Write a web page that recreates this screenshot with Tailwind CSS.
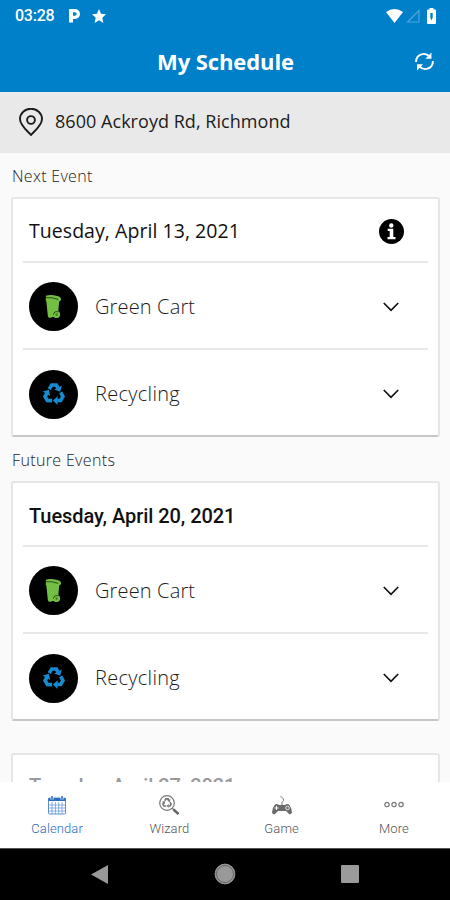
<!DOCTYPE html>
<html lang="en">
<head>
<meta charset="utf-8">
<title>My Schedule</title>
<script src="https://cdn.jsdelivr.net/npm/@tailwindcss/browser@4"></script>
</head>
<body class="w-[450px] h-[900px] overflow-hidden bg-[#fafafa] font-['Open_Sans','Noto_Sans',sans-serif] text-black whitespace-nowrap">
<svg class="hidden">
  <symbol id="cart" viewBox="0 0 18 26">
    <path fill="#72bf44" d="M1 1.500Q6 0 13 2Q17 2.500 17 6L15 8L14 19L12 25H10V24H7V25H4L3 23L1.500 8L.8 7Z"/>
    <circle cx="12.300" cy="21.500" r="3.700" fill="#72bf44"/>
    <path fill="none" stroke="#102308" stroke-width=".8" d="M1 3.700Q8 3 14 5.500M9 21.500a3.300 3.300 0 0 1 5-2.700"/>
    <circle cx="12.300" cy="21.700" r="1.200" fill="#3c7422"/>
  </symbol>
  <symbol id="recycle" viewBox="-12 -12 24 24">
    <g id="arrow"><path fill="none" stroke="currentColor" stroke-width="3.600" d="M-4.800-4.900L-2.300-9H2.300L4-6"/><path fill="currentColor" d="M.2-4.400L6.200-2.300L7.800-8.600Z"/></g>
    <use href="#arrow" transform="rotate(120)"/>
    <use href="#arrow" transform="rotate(240)"/>
  </symbol>
  <symbol id="chevron" viewBox="0 0 16 10"><path fill="none" stroke="#111" stroke-width="1.700" d="M.8 1L8 8.300L15.200 1"/></symbol>
</svg>
<div class="flex h-[900px] flex-col">
  <header class="h-[92px] shrink-0 bg-[#0080c9] text-white">
    <div class="flex h-8 items-center pl-[15px] pr-[14px]">
      <span class="w-[54px] font-['Roboto'] text-[16px] font-medium tracking-[-0.25px]">03:28</span>
      <svg class="h-[14px] w-[11px]" viewBox="0 0 11 14"><path fill="white" fill-rule="evenodd" d="M.5 0H6A5 5 0 0 1 6 10H4V13.500H0V.5ZM4 3.300V6.700H6A1.700 1.700 0 0 0 6 3.300Z"/></svg>
      <svg class="ml-3 h-[14px] w-[14px]" viewBox="0 0 14 14"><path fill="white" d="M7 0L9 4.700L14 5.200L10.300 8.700L11.400 14L7 11.300L2.600 14L3.700 8.700L0 5.200L5 4.700Z"/></svg>
      <svg class="ml-auto h-[14px] w-[17px]" viewBox="0 0 17 14"><path fill="white" d="M0 3Q8.500-3 17 3L8.500 14Z"/></svg>
      <svg class="ml-[3px] h-[14px] w-[14px]" viewBox="0 0 14 14"><path fill="none" stroke="#4ba5d9" stroke-width="1.200" d="M1.500 13L13 1.500V13Z"/></svg>
      <svg class="ml-[7px] h-4 w-[9px]" viewBox="0 0 9 16"><path fill="white" d="M2.500 0H6.500V1.500H8Q9 1.500 9 2.500V15Q9 16 8 16H1Q0 16 0 15V2.500Q0 1.500 1 1.500H2.500Z"/><path fill="#0080c9" d="M3.300 5H5.700V9.500L4.500 12.500L3.300 9.500Z"/></svg>
    </div>
    <div class="grid h-[59px] grid-cols-[60px_1fr_60px] items-center">
      <h1 class="col-start-2 pl-px text-center text-[22px] font-bold tracking-[-0.1px]">My Schedule</h1>
      <svg class="ml-[25px] h-[19px] w-[19px]" viewBox="0 0 20 19"><g fill="none" stroke="white" stroke-width="2"><path d="M1.200 10C.8 2.500 10-1.500 15.500 4.500"/><path d="M18.800 9C19.200 16.500 10 20.500 4.500 14.500"/></g><path fill="white" d="M17.300 0V6.500H11ZM2.200 19V12.500H8.500Z"/></svg>
    </div>
  </header>
  <div class="flex h-[61px] shrink-0 items-center bg-[#e9e9e9] pb-[2px] pl-[19px]">
    <svg class="h-[28px] w-6" viewBox="0 0 24 28"><path fill="none" stroke="#1c1c1c" stroke-width="1.900" d="M12 27C9 23.500 1 17.500 1 11a11 10.300 0 0 1 22 0C23 17.500 15 23.500 12 27Z"/><circle cx="12" cy="12" r="3.900" fill="none" stroke="#1c1c1c" stroke-width="1.900"/></svg>
    <span class="ml-3 text-[18px] tracking-[0.04px] text-[#1c1c1c]">8600 Ackroyd Rd, Richmond</span>
  </div>
  <main class="min-h-0 flex-1 overflow-hidden pl-[11px] pr-[10px]">
    <h2 class="flex h-[44px] items-center pt-px pl-px text-[16px] font-light tracking-[0.3px] text-[#222]">Next Event</h2>
    <section class="h-[240px] rounded-[3px] border-2 border-t-[#e6e6e6] border-x-[#e6e6e6] border-b-[#c6c6c6] bg-white px-[10px]">
      <div class="flex h-[64px] items-center border-b-2 border-[#e8e8e8] pl-[6px] pr-[24px] pt-[2px]">
        <span class="text-[19.500px] tracking-[0.05px] text-[#111]">Tuesday, April 13, 2021</span>
        <svg class="ml-auto h-[25px] w-[25px]" viewBox="0 0 25 25"><circle cx="12.500" cy="12.500" r="12.500"/><circle cx="12.300" cy="6.500" r="2.200" fill="white"/><path fill="white" d="M8.700 9.800H14.300V18H16.500V20.200H8.500V18H10.700V12H8.700Z"/></svg>
      </div>
      <div class="flex h-[87px] items-center border-b-2 border-[#e8e8e8] pl-[6px] pr-[29px] pt-[2px]">
        <div class="flex h-[49px] w-[49px] items-center justify-center rounded-full bg-black"><svg class="h-[25px] w-[17px]"><use href="#cart"/></svg></div>
        <span class="ml-[17px] text-[20px] font-light tracking-[0.15px] text-[#1c1c1c]">Green Cart</span><svg class="ml-auto h-[10px] w-4"><use href="#chevron"/></svg>
      </div>
      <div class="flex h-[86px] items-center pl-[6px] pr-[29px] pt-[2px]">
        <div class="flex h-[49px] w-[49px] items-center justify-center rounded-full bg-black text-[#168bd2]"><svg class="h-[24px] w-[24px]"><use href="#recycle"/></svg></div>
        <span class="ml-[17px] text-[20px] font-light tracking-[0.3px] text-[#1c1c1c]">Recycling</span><svg class="ml-auto h-[10px] w-4"><use href="#chevron"/></svg>
      </div>
    </section>
    <h2 class="flex h-[44px] items-center pt-px pl-px text-[16px] font-light tracking-[0.35px] text-[#222]">Future Events</h2>
    <section class="h-[240px] rounded-[3px] border-2 border-t-[#e6e6e6] border-x-[#e6e6e6] border-b-[#c6c6c6] bg-white px-[10px]">
      <div class="flex h-[64px] items-center border-b-2 border-[#e8e8e8] pl-[6px] pt-[4px]">
        <span class="font-['Roboto'] text-[20px] font-medium tracking-[-0.05px] text-[#111]">Tuesday, April 20, 2021</span>
      </div>
      <div class="flex h-[87px] items-center border-b-2 border-[#e8e8e8] pl-[6px] pr-[29px] pt-[2px]">
        <div class="flex h-[49px] w-[49px] items-center justify-center rounded-full bg-black"><svg class="h-[25px] w-[17px]"><use href="#cart"/></svg></div>
        <span class="ml-[17px] text-[20px] font-light tracking-[0.15px] text-[#1c1c1c]">Green Cart</span><svg class="ml-auto h-[10px] w-4"><use href="#chevron"/></svg>
      </div>
      <div class="flex h-[86px] items-center pl-[6px] pr-[29px] pt-[2px]">
        <div class="flex h-[49px] w-[49px] items-center justify-center rounded-full bg-black text-[#168bd2]"><svg class="h-[24px] w-[24px]"><use href="#recycle"/></svg></div>
        <span class="ml-[17px] text-[20px] font-light tracking-[0.3px] text-[#1c1c1c]">Recycling</span><svg class="ml-auto h-[10px] w-4"><use href="#chevron"/></svg>
      </div>
    </section>
    <section class="mt-8 h-[240px] rounded-[3px] border-2 border-[#e6e6e6] bg-white px-[10px]">
      <div class="flex h-[62px] items-center pl-[6px]"><span class="font-['Roboto'] text-[20px] font-medium tracking-[-0.05px] text-[#999]">Tuesday, April 27, 2021</span></div>
    </section>
  </main>
  <nav class="grid h-[66px] shrink-0 grid-cols-4 bg-white pt-[13px] pl-px font-['Roboto'] text-[13px] font-light text-[#555]">
    <div class="flex flex-col items-center text-[#2a6cc0]">
      <svg class="h-5 w-5" viewBox="0 0 20 20"><rect x="1.500" y="3" width="17" height="16" rx="1" fill="none" stroke="#5b91d2"/><path fill="currentColor" d="M1.500 3H18.500V6H1.500Z"/><path fill="none" stroke="#5b91d2" stroke-width=".7" d="M5 7V19M8.400 7V19M11.700 7V19M15 7V19M2 10H18M2 13H18M2 16H18"/><path stroke="white" stroke-width="3" d="M5 1V4.500M15 1V4.500"/><path stroke="currentColor" stroke-width="1.500" d="M5 1V4.500M15 1V4.500"/></svg>
      <span class="mt-[4px] tracking-[0.1px]">Calendar</span>
    </div>
    <div class="flex flex-col items-center">
      <svg class="h-5 w-5" viewBox="0 0 20 20"><circle cx="8" cy="8" r="7.300" fill="none" stroke="#777" stroke-width="1.200"/><svg x="2.500" y="2.500" width="11" height="11" color="#777"><use href="#recycle"/></svg><path stroke="#777" stroke-width="1.200" d="M13 13L15 15"/><path stroke="#666" stroke-width="2.500" d="M14.500 14.500L19.500 19"/></svg>
      <span class="mt-[4px] tracking-[0.1px]">Wizard</span>
    </div>
    <div class="flex flex-col items-center">
      <svg class="h-5 w-5" viewBox="0 0 20 20"><path fill="none" stroke="#777" d="M10 10V7.500Q12.500 5.500 11 3.500L8.500 1"/><path fill="#6b6b6b" d="M3 9.500Q5 8.500 7 10H13Q15 8.500 17 9.500Q20 13 20 17.500Q19 20 17 19L14 16H6L3 19Q1 20 0 17.500Q0 13 3 9.500Z"/><path stroke="white" d="M2.500 13H6.500M4.500 11V15"/><circle cx="15.500" cy="13" r="1.800" fill="none" stroke="white" stroke-width=".8"/></svg>
      <span class="mt-[4px] tracking-[0.1px]">Game</span>
    </div>
    <div class="flex flex-col items-center">
      <svg class="h-5 w-5" viewBox="0 0 20 20"><g fill="none" stroke="#777" stroke-width="1.200"><circle cx="3" cy="9.500" r="2.200"/><circle cx="10" cy="9.500" r="2.200"/><circle cx="17" cy="9.500" r="2.200"/></g></svg>
      <span class="mt-[4px] tracking-[0.1px]">More</span>
    </div>
  </nav>
  <footer class="flex h-[52px] shrink-0 items-center border-t border-[#555] bg-black pb-px pl-[91px]">
    <svg class="h-[19px] w-[17px]" viewBox="0 0 17 19"><path fill="#999" d="M0 9.500L17 0V19Z"/></svg>
    <svg class="ml-[106px] h-[22px] w-[22px]" viewBox="0 0 22 22"><circle cx="11" cy="11" r="9.900" fill="#999" stroke="#999"/><circle cx="11" cy="11" r="8.500" fill="none" stroke="#666"/></svg>
    <div class="ml-[105px] h-[18px] w-[18px] rounded-[1px] bg-[#9a9a9a]"></div>
  </footer>
</div>
</body>
</html>
